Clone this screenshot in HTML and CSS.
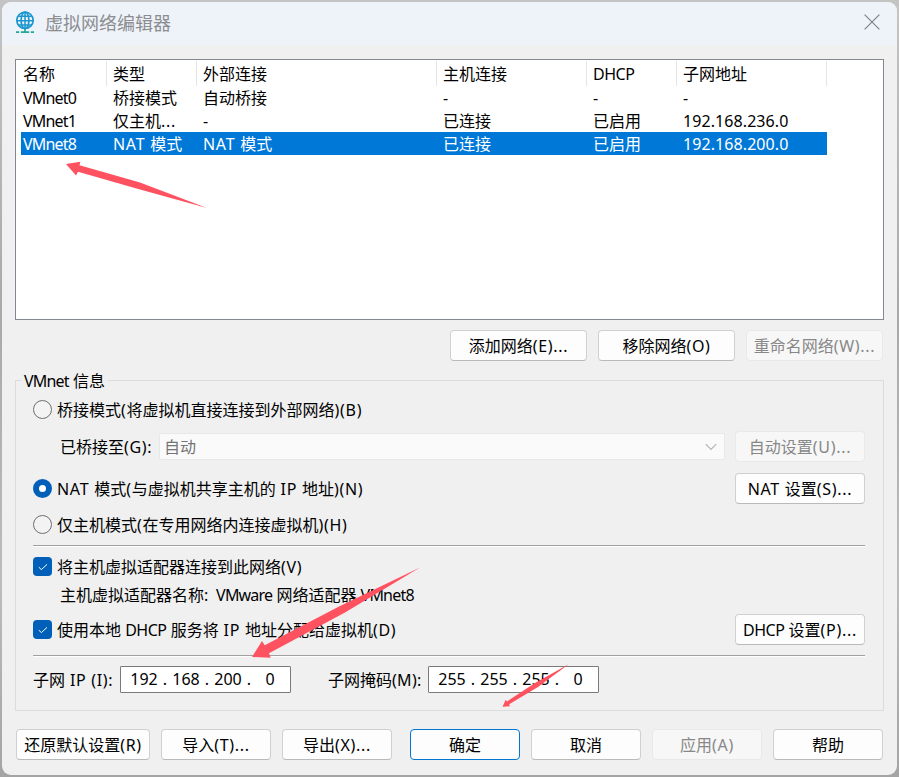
FILE: index.html
```html
<!DOCTYPE html>
<html lang="zh-CN">
<head>
<meta charset="utf-8">
<title>虚拟网络编辑器</title>
<link rel="stylesheet" href="styles.css">
</head>
<body>
<div class="window">
  <header class="titlebar">
    <svg class="app-icon" width="20" height="24" viewBox="0 0 20 24" fill="none" stroke="#1b96cf" stroke-width="1.7">
      <circle cx="10" cy="9.3" r="8.2"/>
      <ellipse cx="10" cy="9.3" rx="3.9" ry="8.2"/>
      <path d="M10 1v17M3.2 5.2h13.6M1.8 9.8h16.4M3.2 14h13.6" stroke-width="1.5"/>
      <path stroke="#20a795" d="M1 21.200h3.200M5.800 21.200h8.400M15.800 21.200H19M10 18v3"/>
    </svg>
    <h1 class="title">虚拟网络编辑器</h1>
    <svg class="close" width="16" height="16" viewBox="0 0 16 16" stroke="#858789" stroke-width="1.3"><path d="M.6.6l14.8 14.8M15.4.6.6 15.4"/></svg>
  </header>
  <main class="content">
    <div class="list">
      <div class="row head"><span>名称</span><span>类型</span><span>外部连接</span><span>主机连接</span><span class="dhcp-head">DHCP</span><span>子网地址</span></div>
      <div class="row"><span class="vm">VMnet0</span><span>桥接模式</span><span>自动桥接</span><span>-</span><span>-</span><span>-</span></div>
      <div class="row"><span class="vm">VMnet1</span><span>仅主机<em>...</em></span><span>-</span><span>已连接</span><span>已启用</span><span class="addr">192.168.236.0</span></div>
      <div class="row selected"><span class="vm">VMnet8</span><span><em>NAT </em>模式</span><span><em>NAT </em>模式</span><span>已连接</span><span>已启用</span><span class="addr">192.168.200.0</span></div>
    </div>
    <div class="actions">
      <button>添加网络<em>(E)...</em></button><button>移除网络<em>(O)</em></button><button disabled>重命名网络<em>(W)...</em></button>
    </div>
    <section class="group">
      <h2 class="legend"><b class="vm">VMnet</b> 信息</h2>
      <div class="line bridge"><i class="radio"></i><span>桥接模式<em>(</em>将虚拟机直接连接到外部网络<em>)(B)</em></span></div>
      <div class="line bridged-to">
        <span class="label">已桥接至<em>(G):</em></span>
        <div class="combo"><span>自动</span><svg width="12" height="8" viewBox="0 0 12 8" fill="none" stroke="#b4b4b4" stroke-width="1.2"><path d="M.8 1.2 6 6.4l5.2-5.2"/></svg></div>
        <button disabled>自动设置<em>(U)...</em></button>
      </div>
      <div class="line nat"><i class="radio on"></i><span><em>NAT </em>模式<em>(</em>与虚拟机共享主机的<em> IP </em>地址<em>)(N)</em></span><button><em>NAT </em>设置<em>(S)...</em></button></div>
      <div class="line host"><i class="radio"></i><span>仅主机模式<em>(</em>在专用网络内连接虚拟机<em>)(H)</em></span></div>
      <hr>
      <div class="line adapter"><i class="check"><svg width="10" height="8" viewBox="0 0 10 8" fill="none" stroke="#fff" stroke-width="1"><path d="M.8 4.2 3.4 6.6 9 1.4"/></svg></i><span>将主机虚拟适配器连接到此网络<em>(V)</em></span></div>
      <div class="line adapter-name"><span>主机虚拟适配器名称<em class="colon">: </em><b class="vm">VMware</b> 网络适配器 <b class="vm">VMnet8</b></span></div>
      <div class="line dhcp"><i class="check"><svg width="10" height="8" viewBox="0 0 10 8" fill="none" stroke="#fff" stroke-width="1"><path d="M.8 4.2 3.4 6.6 9 1.4"/></svg></i><span>使用本地 <b class="dh">DHCP</b> 服务将<em> IP </em>地址分配给虚拟机<em>(D)</em></span><button><b class="dh">DHCP</b> 设置<em>(P)...</em></button></div>
      <hr class="second">
      <div class="line subnet">
        <span class="ip-label">子网<em> IP (I):</em></span>
        <div class="ip"><b>192</b><i>.</i><b>168</b><i>.</i><b>200</b><i>.</i><b>0</b></div>
        <span class="mask-label">子网掩码<em class="mask-key">(M):</em></span>
        <div class="ip"><b>255</b><i>.</i><b>255</b><i>.</i><b>255</b><i>.</i><b>0</b></div>
      </div>
    </section>
    <footer class="footer">
      <button class="restore">还原默认设置<em>(R)</em></button><button>导入<em>(T)...</em></button><button>导出<em>(X)...</em></button><button class="primary">确定</button><button>取消</button><button disabled>应用<em>(A)</em></button><button>帮助</button>
    </footer>
  </main>
</div>
<svg class="arrows" width="899" height="777" viewBox="0 0 899 777" fill="#ff5261">
  <path d="M66 164 80.3 161.8 79.5 165.3 140 182.500 207 208 140 189.500 78 171.800 76 175.500Z"/>
  <path d="M252 657 262 641 264.700 645.200 340 606 420 567.500 345 612.500 269 653.300 270.700 657.700Z"/>
  <path d="M502.500 706.700 505.700 699.700 507 701.500 535 683 569 664 538 687 509.200 704.300 510 706.200Z"/>
</svg>
</body>
</html>
```
FILE: styles.css
```css
* { box-sizing: border-box; }
body {
  margin: 0;
  width: 899px;
  height: 777px;
  overflow: hidden;
  padding: 2px;
  background: linear-gradient(#c4c4c4, #a9a9a9 40%, #bcbcbc 75%, #a4a4a4);
  color: #000;
  font: 16px/22px "Noto Sans", "Noto Sans CJK SC", sans-serif;
  white-space: nowrap;
}
.window {
  height: 773px;
  border-radius: 9px;
  overflow: hidden;
  background: #f0f0f0;
}
em { font-style: normal; letter-spacing: .7px; }
b { font-weight: 400; }
.vm { letter-spacing: -.8px; }
.dh { letter-spacing: -.5px; }
.dhcp-head { letter-spacing: -.5px; }
.addr { letter-spacing: .08px; }
.colon { letter-spacing: 1.8px; }
.mask-key { letter-spacing: .3px; }
.titlebar {
  display: flex;
  align-items: center;
  height: 43px;
  padding: 0 17px 3px 13px;
  background: #eef3f9;
}
.app-icon { position: relative; top: 1px; }
.title {
  flex: 1;
  margin: 0 0 1px 10px;
  font: 18px/24px "Noto Sans CJK SC", sans-serif;
  color: #8b8d90;
}
.content { padding: 14px 13px 0; }
.list {
  height: 261px;
  border: 1px solid #828790;
  background: #fff;
}
.row {
  display: grid;
  grid-template-columns: 90px 90px 240px 150px 90px 150px;
  width: 811px;
  height: 23px;
  line-height: 25px;
}
.row span { padding-left: 7px; }
.head { height: 26px; }
.head span {
  height: 25px;
  margin-top: 1px;
  line-height: 26px;
  border-right: 1px solid #e5e5e5;
  margin-right: -1px;
}
.selected {
  background: linear-gradient(#0078d7, #0078d7) 5px 0 / 806px 23px no-repeat;
  color: #fff;
}
button {
  height: 31px;
  padding: 0;
  border: 1px solid #d0d0d0;
  border-bottom-color: #bababa;
  border-radius: 4px;
  background: #fdfdfd;
  color: #000;
  font: inherit;
}
button:disabled {
  border-color: #e9e9e9;
  background: #f7f7f7;
  color: #888;
}
.actions {
  display: flex;
  justify-content: flex-end;
  gap: 11px;
  margin: 10px 1px 0 0;
}
.actions button { width: 137px; }
.group {
  height: 331px;
  margin-top: 19px;
  border: 1px solid #dcdcdc;
  padding: 0 18px 0 17px;
}
.legend {
  width: max-content;
  height: 18px;
  margin: -9px 0 0 -11px;
  padding: 0 3px 0 2px;
  background: #f0f0f0;
  font: inherit;
  line-height: 18px;
}
.line { display: flex; align-items: center; }
.line button { width: 130px; margin-left: auto; }
.bridge { height: 22px; margin-top: 9px; }
.bridged-to { height: 31px; margin-top: 10px; }
.nat { height: 31px; margin-top: 11px; }
.host { height: 22px; margin-top: 10px; }
.adapter { height: 22px; margin-top: 9px; }
.adapter-name { height: 22px; margin-top: 6px; padding-left: 27px; }
.dhcp { height: 31px; margin-top: 8px; }
.subnet { height: 27px; margin-top: 9px; }
.radio, .check { flex: none; width: 19px; height: 19px; margin-right: 5px; }
.bridge .radio, .host .radio, .adapter .check { margin-bottom: 1px; }
.radio { border: 1px solid #6e6e6e; border-radius: 50%; background: #f3f3f3; }
.radio.on { border: 6px solid #005fb8; background: #fff; }
.check {
  display: grid;
  place-items: center;
  border-radius: 4px;
  background: #005fb8;
}
.label { width: 126px; padding-left: 27px; }
.combo {
  display: flex;
  align-items: center;
  justify-content: space-between;
  width: 566px;
  height: 27px;
  padding: 0 7px 0 4px;
  border: 1px solid #e8e8e8;
  border-radius: 2px;
  background: #fafafa;
  color: #747474;
}
hr {
  height: 2px;
  margin: 9px 0 0;
  border: 0;
  border-top: 1px solid #a0a0a0;
  background: #fff;
}
hr.second { margin-top: 10px; }
.ip-label { width: 87px; }
.mask-label { width: 137px; padding-left: 37px; }
.ip {
  display: flex;
  width: 171px;
  height: 27px;
  padding-left: 5px;
  border: 1px solid #7a7a7a;
  border-radius: 1px;
  background: #fff;
  line-height: 25px;
}
.ip b { width: 36px; text-align: center; }
.ip i { width: 6px; font-style: normal; text-align: center; }
.footer {
  display: flex;
  gap: 11px;
  margin: 18px 0 0 1px;
}
.footer button { width: 110px; }
.footer .restore { width: 134px; }
.footer .primary { margin-left: 7px; border-color: #0078d4; }
.arrows { position: absolute; left: 0; top: 0; }
```
